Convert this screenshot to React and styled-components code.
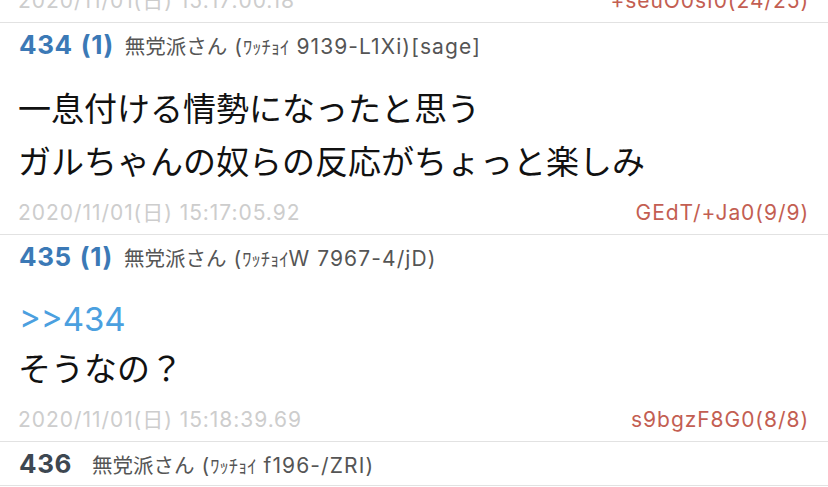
import React from "react";
import styled, { createGlobalStyle } from "styled-components";

const Global = createGlobalStyle`
  html, body { margin: 0; padding: 0; background: #ffffff; }
  body {
    font-family: "Inter", "Noto Sans CJK JP", sans-serif;
    -webkit-font-smoothing: antialiased;
  }
`;

const Screen = styled.div`
  width: 828px;
  height: 487px;
  overflow: hidden;
  background: #ffffff;
`;

const List = styled.div`
  display: flex;
  flex-direction: column;
  margin-top: -25px;
`;

const Post = styled.div`
  display: flex;
  flex-direction: column;
  padding: ${(p) => (p.$partial ? "0 20px 7px 18px" : "8px 20px 7px 18px")};
  border-bottom: 1px solid #e2e2e2;
`;

const Header = styled.div`
  display: flex;
  align-items: baseline;
  height: 28px;
  line-height: 28px;
  white-space: nowrap;
`;

const Num = styled.span`
  font-family: "Inter", sans-serif;
  font-weight: 700;
  font-size: 26px;
  letter-spacing: 0.6px;
  color: ${(p) => (p.$replied ? "#3b79b6" : "#3d4751")};
  margin-left: 1px;
`;

const Count = styled.span`
  font-family: "Inter", sans-serif;
  font-weight: 700;
  font-size: 26px;
  letter-spacing: 0.6px;
  color: #3b79b6;
  margin-left: 8px;
`;

const Name = styled.span`
  font-family: "Noto Sans CJK JP", sans-serif;
  font-size: 20.5px;
  color: #555555;
  margin-left: ${(p) => (p.$wide ? "20px" : "11px")};
`;

const Meta = styled.span`
  font-family: "Inter", "Noto Sans CJK JP", sans-serif;
  font-size: 21px;
  letter-spacing: 1.1px;
  color: #555555;
  margin-left: 7px;
`;

const Kana = styled.span`
  font-family: "Noto Sans CJK JP", sans-serif;
  font-size: 18.5px;
  letter-spacing: 0;
`;

const Body = styled.div`
  margin-top: 22px;
  display: flex;
  flex-direction: column;
  font-family: "Noto Sans CJK JP", sans-serif;
  font-size: 33px;
  color: #111111;
`;

const Line = styled.div`
  line-height: 53px;
  height: 53px;
  white-space: nowrap;
`;

const Anchor = styled.div`
  font-family: "Inter", sans-serif;
  font-size: 33px;
  line-height: 48px;
  height: 48px;
  color: #4ba0df;
  margin-left: 1px;
  padding-top: 2px;
  box-sizing: border-box;
`;

const Footer = styled.div`
  margin-top: 12px;
  display: flex;
  justify-content: space-between;
  align-items: center;
  height: 28px;
  line-height: 28px;
  font-family: "Inter", "Noto Sans CJK JP", sans-serif;
  font-size: 21px;
  letter-spacing: 0.95px;
  white-space: nowrap;
`;

const Time = styled.span`
  color: #cdcdcd;
`;

const Id = styled.span`
  color: #c35e52;
  margin-right: -1px;
`;

const posts = [
  {
    partial: true,
    time: "2020/11/01(日) 15:17:00.18",
    id: "+seuO0sI0(24/25)",
  },
  {
    num: 434,
    count: 1,
    kana: "ﾜｯﾁｮｲ",
    meta: " 9139-L1Xi)[sage]",
    lines: ["一息付ける情勢になったと思う", "ガルちゃんの奴らの反応がちょっと楽しみ"],
    time: "2020/11/01(日) 15:17:05.92",
    id: "GEdT/+Ja0(9/9)",
  },
  {
    num: 435,
    count: 1,
    kana: "ﾜｯﾁｮｲ",
    meta: "W 7967-4/jD)",
    anchor: ">>434",
    lines: ["そうなの？"],
    time: "2020/11/01(日) 15:18:39.69",
    id: "s9bgzF8G0(8/8)",
  },
  {
    num: 436,
    kana: "ﾜｯﾁｮｲ",
    meta: " f196-/ZRI)",
    lines: [],
  },
];

export default function App() {
  return (
    <Screen>
      <Global />
      <List>
        {posts.map((p, i) => (
          <Post key={i} $partial={p.partial}>
            {!p.partial && (
              <Header>
                <Num $replied={!!p.count}>{p.num}</Num>
                {p.count && <Count>({p.count})</Count>}
                <Name $wide={!p.count}>無党派さん</Name>
                <Meta>
                  (<Kana>{p.kana}</Kana>
                  {p.meta}
                </Meta>
              </Header>
            )}
            {!p.partial && p.lines.length > 0 && (
              <Body>
                {p.anchor && <Anchor>{p.anchor}</Anchor>}
                {p.lines.map((l, j) => (
                  <Line key={j}>{l}</Line>
                ))}
              </Body>
            )}
            {p.time && (
              <Footer>
                <Time>{p.time}</Time>
                <Id>{p.id}</Id>
              </Footer>
            )}
          </Post>
        ))}
      </List>
    </Screen>
  );
}
